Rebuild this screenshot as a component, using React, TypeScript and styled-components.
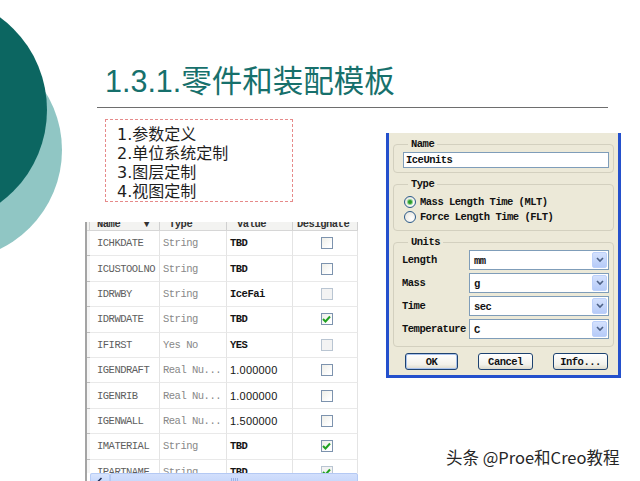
import React from "react";
import styled, { createGlobalStyle } from "styled-components";

const MONO = `"Liberation Mono", "DejaVu Sans Mono", monospace`;
const SANS = `"Liberation Sans", "Noto Sans CJK SC", sans-serif`;

const GlobalStyle = createGlobalStyle`
  html, body { margin: 0; padding: 0; background: #fff; }
  body { width: 640px; height: 481px; overflow: hidden; }
`;

const Slide = styled.div`
  position: relative;
  width: 640px;
  height: 481px;
  overflow: hidden;
  background: #fff;
  font-family: ${SANS};
`;

const Circle = styled.div<{ $x: number; $y: number; $r: number; $color: string }>`
  position: absolute;
  left: ${(p) => p.$x - p.$r}px;
  top: ${(p) => p.$y - p.$r}px;
  width: ${(p) => p.$r * 2}px;
  height: ${(p) => p.$r * 2}px;
  border-radius: 50%;
  background: ${(p) => p.$color};
`;

const Content = styled.div`
  position: relative;
  display: flex;
  flex-direction: column;
`;

const Title = styled.h1`
  margin: 63px 0 0 105px;
  font: 400 30.5px/36px ${SANS};
  color: #17706c;
  white-space: nowrap;
`;

const Rule = styled.div`
  margin: 8px 0 0 97px;
  width: 511px;
  height: 1px;
  background: #6e6e6e;
`;

const Body = styled.div`
  display: flex;
  align-items: flex-start;
  padding-left: 85px;
  gap: 28px;
`;

const LeftCol = styled.div`
  margin-top: 11px;
  display: flex;
  flex-direction: column;
  gap: 20px;
`;

const OutlineBox = styled.div`
  margin-left: 20px;
  box-sizing: border-box;
  width: 188px;
  height: 83px;
  border: 1px dashed #e68a8a;
  padding: 5px 0 0 11px;
  display: flex;
  flex-direction: column;
`;

const OutlineItem = styled.div`
  font: 400 16px/19px "DejaVu Sans", "Noto Sans CJK SC", sans-serif;
  color: #1e1e1e;
  white-space: nowrap;
`;

/* ---------- Parameter table ---------- */

const COLS = "3px 70px 67px 66px 65px";

const Table = styled.div`
  box-sizing: border-box;
  width: 273px;
  height: 267px;
  border-left: 2px solid #a4a4a4;
  background: #fff;
  display: flex;
  flex-direction: column;
  overflow: hidden;
`;

const HeaderRow = styled.div`
  display: grid;
  grid-template-columns: ${COLS};
  height: 9px;
  flex: none;
  overflow: hidden;
  background: #f3f3f1;
  border-bottom: 1px solid #d6d6d6;
  box-sizing: border-box;
`;

const HeaderCell = styled.div<{ $pad: number }>`
  display: flex;
  align-items: flex-end;
  padding-left: ${(p) => p.$pad}px;
  border-right: 1px solid #d0d0d0;
  font: 700 10.5px/12px ${MONO};
  letter-spacing: -0.5px;
  color: #333;
  white-space: nowrap;
  overflow: hidden;
`;

const Rows = styled.div`
  flex: 1;
  overflow: hidden;
`;

const Row = styled.div`
  display: grid;
  grid-template-columns: ${COLS};
  height: 25.4px;
`;

const Gutter = styled.div`
  border-bottom: 1px solid #bdbdbd;
  background: #f6f6f6;
`;

const Cell = styled.div<{ $pad?: number; $center?: boolean }>`
  display: flex;
  align-items: center;
  justify-content: ${(p) => (p.$center ? "center" : "flex-start")};
  padding-left: ${(p) => p.$pad ?? 3}px;
  border-right: 1px solid #e4e4e4;
  border-bottom: 1px solid #e9e9e9;
  white-space: nowrap;
  overflow: hidden;
`;

const NameText = styled.span`
  font: 400 10.5px ${MONO};
  letter-spacing: -0.5px;
  color: #5e5e5e;
`;

const TypeText = styled.span`
  font: 400 10.5px ${MONO};
  letter-spacing: -0.5px;
  color: #888;
`;

const ValueText = styled.span<{ $num?: boolean }>`
  font: ${(p) => (p.$num ? `400 11px ${SANS}` : `700 10.5px ${MONO}`)};
  color: #151515;
  letter-spacing: ${(p) => (p.$num ? "0.2px" : "-0.5px")};
`;

const Box = styled.div<{ $faded?: boolean }>`
  box-sizing: border-box;
  width: 12px;
  height: 12px;
  margin-left: 3px;
  border: 1px solid ${(p) => (p.$faded ? "#b9c5d2" : "#7d93ae")};
  background: ${(p) =>
    p.$faded ? "#f3f3f3" : "linear-gradient(135deg, #eeeee8 0%, #ffffff 80%)"};
  display: flex;
  align-items: center;
  justify-content: center;
`;

const ScrollBar = styled.div`
  flex: none;
  height: 16px;
  margin-left: 3px;
  display: flex;
  background: #f4f4f0;
`;

const ScrollBtn = styled.div`
  box-sizing: border-box;
  width: 20px;
  height: 16px;
  border: 1px solid #b8cdf6;
  border-radius: 2px;
  background: linear-gradient(#d8e4fd, #bcd0fa);
  display: flex;
  align-items: center;
  justify-content: center;
`;

const ScrollThumb = styled.div`
  flex: 1;
  box-sizing: border-box;
  height: 16px;
  border: 1px solid #b4c9f4;
  border-radius: 2px;
  background: linear-gradient(#d2dffc, #c0d2fa);
  display: flex;
  align-items: center;
  justify-content: center;
  gap: 1px;
`;

const Grip = styled.span`
  width: 1px;
  height: 6px;
  background: #9db4e6;
`;

/* ---------- Dialog ---------- */

const Dialog = styled.div`
  margin-top: 25px;
  box-sizing: border-box;
  width: 235px;
  height: 245px;
  background: #ece9d8;
  border: 3px solid #2450cc;
  border-top: none;
  padding: 5px 4px 0 4px;
  display: flex;
  flex-direction: column;
  gap: 5px;
  font: 700 10.5px ${MONO};
  letter-spacing: -0.5px;
  color: #111;
`;

const Group = styled.fieldset<{ $pad: string }>`
  margin: 0;
  min-width: 0;
  border: 1px solid #d3d0bf;
  border-radius: 4px;
  padding: ${(p) => p.$pad};
  display: flex;
  flex-direction: column;
`;

const Legend = styled.legend`
  margin-left: 14px;
  padding: 0 3px;
  font: 700 10.5px/12px ${MONO};
  letter-spacing: -0.5px;
  color: #111;
`;

const TextInput = styled.div`
  box-sizing: border-box;
  margin-left: 9px;
  height: 16px;
  border: 1px solid #7f9db9;
  background: #fff;
  padding-left: 2px;
  display: flex;
  align-items: center;
`;

const RadioRow = styled.div`
  height: 15px;
  padding-left: 10px;
  display: flex;
  align-items: center;
  gap: 4px;
  white-space: nowrap;
`;

const Radio = styled.span<{ $on?: boolean }>`
  box-sizing: border-box;
  width: 12px;
  height: 12px;
  border-radius: 50%;
  border: 1px solid #2a5a8a;
  background: radial-gradient(circle at 65% 65%, #fff 0%, #e6e4dc 90%);
  display: flex;
  align-items: center;
  justify-content: center;

  &::after {
    content: "";
    display: ${(p) => (p.$on ? "block" : "none")};
    width: 4px;
    height: 4px;
    border-radius: 50%;
    background: #2b9a2b;
    box-shadow: 0 0 0 1px #8fd38f;
  }
`;

const UnitsGrid = styled.div`
  padding-left: 8px;
  display: grid;
  grid-template-columns: 67px 140px;
  grid-auto-rows: 20px;
  row-gap: 3px;
  align-items: center;
`;

const UnitLabel = styled.span`
  white-space: nowrap;
`;

const Combo = styled.div`
  box-sizing: border-box;
  height: 20px;
  border: 1px solid #7f9db9;
  background: #fff;
  display: flex;
  align-items: center;
  padding: 1px;
`;

const ComboValue = styled.span`
  flex: 1;
  padding-left: 3px;
  padding-top: 2px;
`;

const DropBtn = styled.span`
  box-sizing: border-box;
  width: 15px;
  height: 16px;
  border: 1px solid #bcd0fa;
  border-radius: 2px;
  background: linear-gradient(#d4e1fd, #b6cbf8);
  display: flex;
  align-items: center;
  justify-content: center;
`;

const ButtonRow = styled.div`
  margin-top: 1px;
  padding-left: 12px;
  display: flex;
  gap: 20px;
`;

const Btn = styled.div<{ $w: number; $def?: boolean }>`
  box-sizing: border-box;
  width: ${(p) => p.$w}px;
  height: 17px;
  border: 1px solid #1d4270;
  border-radius: 3px;
  background: linear-gradient(#ffffff 0%, #f2f1ea 70%, #dcd9cc 100%);
  box-shadow: ${(p) => (p.$def ? "inset 0 0 0 1px #a9c2ec" : "none")};
  display: flex;
  align-items: center;
  justify-content: center;
  color: #111;
`;

const Watermark = styled.div`
  position: absolute;
  left: 446px;
  top: 446px;
  font: 400 16.5px/22px "Noto Sans CJK SC", sans-serif;
  color: #262626;
  white-space: nowrap;
  text-shadow: 0 0 2px #fff, 0 0 3px #fff;
`;

type Row = {
  name: string;
  type: string;
  value: string;
  num?: boolean;
  check?: boolean;
  faded?: boolean;
};

const rows: Row[] = [
  { name: "ICHKDATE", type: "String", value: "TBD" },
  { name: "ICUSTOOLNO", type: "String", value: "TBD" },
  { name: "IDRWBY", type: "String", value: "IceFai", faded: true },
  { name: "IDRWDATE", type: "String", value: "TBD", check: true },
  { name: "IFIRST", type: "Yes No", value: "YES", faded: true },
  { name: "IGENDRAFT", type: "Real Nu...", value: "1.000000", num: true },
  { name: "IGENRIB", type: "Real Nu...", value: "1.000000", num: true },
  { name: "IGENWALL", type: "Real Nu...", value: "1.500000", num: true },
  { name: "IMATERIAL", type: "String", value: "TBD", check: true },
  { name: "IPARTNAME", type: "String", value: "TBD", check: true, faded: true },
];

const units = [
  { label: "Length", value: "mm" },
  { label: "Mass", value: "g" },
  { label: "Time", value: "sec" },
  { label: "Temperature", value: "C" },
];

const Check = () => (
  <svg width="9" height="8" viewBox="0 0 9 8">
    <path d="M1 4 L3.5 6.5 L8 1.5" fill="none" stroke="#21a121" strokeWidth="2" />
  </svg>
);

const Chevron = () => (
  <svg width="8" height="6" viewBox="0 0 8 6">
    <path d="M1 1 L4 4 L7 1" fill="none" stroke="#4d6185" strokeWidth="1.6" />
  </svg>
);

const LeftArrow = () => (
  <svg width="6" height="8" viewBox="0 0 6 8">
    <path d="M4.5 1 L1.5 4 L4.5 7" fill="none" stroke="#1c2f5a" strokeWidth="1.5" />
  </svg>
);

export default function App() {
  return (
    <>
      <GlobalStyle />
      <Slide>
        <Circle $x={-48} $y={150} $r={110} $color="#90c6c4" />
        <Circle $x={-68} $y={110} $r={115} $color="#0c6661" />
        <Content>
          <Title>1.3.1.零件和装配模板</Title>
          <Rule />
          <Body>
            <LeftCol>
              <OutlineBox>
                <OutlineItem>1.参数定义</OutlineItem>
                <OutlineItem>2.单位系统定制</OutlineItem>
                <OutlineItem>3.图层定制</OutlineItem>
                <OutlineItem>4.视图定制</OutlineItem>
              </OutlineBox>
              <Table>
                <HeaderRow>
                  <HeaderCell $pad={0} />
                  <HeaderCell $pad={7}>Name&nbsp;&nbsp;&nbsp;&nbsp;▼</HeaderCell>
                  <HeaderCell $pad={9}>Type</HeaderCell>
                  <HeaderCell $pad={10}>Value</HeaderCell>
                  <HeaderCell $pad={4}>Designate</HeaderCell>
                </HeaderRow>
                <Rows>
                  {rows.map((r) => (
                    <Row key={r.name}>
                      <Gutter />
                      <Cell $pad={7}>
                        <NameText>{r.name}</NameText>
                      </Cell>
                      <Cell>
                        <TypeText>{r.type}</TypeText>
                      </Cell>
                      <Cell>
                        <ValueText $num={r.num}>{r.value}</ValueText>
                      </Cell>
                      <Cell $pad={0} $center>
                        <Box $faded={r.faded}>{r.check && <Check />}</Box>
                      </Cell>
                    </Row>
                  ))}
                </Rows>
                <ScrollBar>
                  <ScrollBtn>
                    <LeftArrow />
                  </ScrollBtn>
                  <ScrollThumb>
                    <Grip />
                    <Grip />
                    <Grip />
                    <Grip />
                  </ScrollThumb>
                </ScrollBar>
              </Table>
            </LeftCol>
            <Dialog>
              <Group $pad="2px 4px 4px 0">
                <Legend>Name</Legend>
                <TextInput>IceUnits</TextInput>
              </Group>
              <Group $pad="4px 4px 6px 0">
                <Legend>Type</Legend>
                <RadioRow>
                  <Radio $on />
                  Mass Length Time (MLT)
                </RadioRow>
                <RadioRow>
                  <Radio />
                  Force Length Time (FLT)
                </RadioRow>
              </Group>
              <Group $pad="2px 4px 7px 0">
                <Legend>Units</Legend>
                <UnitsGrid>
                  {units.map((u) => (
                    <React.Fragment key={u.label}>
                      <UnitLabel>{u.label}</UnitLabel>
                      <Combo>
                        <ComboValue>{u.value}</ComboValue>
                        <DropBtn>
                          <Chevron />
                        </DropBtn>
                      </Combo>
                    </React.Fragment>
                  ))}
                </UnitsGrid>
              </Group>
              <ButtonRow>
                <Btn $w={53} $def>OK</Btn>
                <Btn $w={55}>Cancel</Btn>
                <Btn $w={55}>Info...</Btn>
              </ButtonRow>
            </Dialog>
          </Body>
        </Content>
        <Watermark>头条 @Proe和Creo教程</Watermark>
      </Slide>
    </>
  );
}
